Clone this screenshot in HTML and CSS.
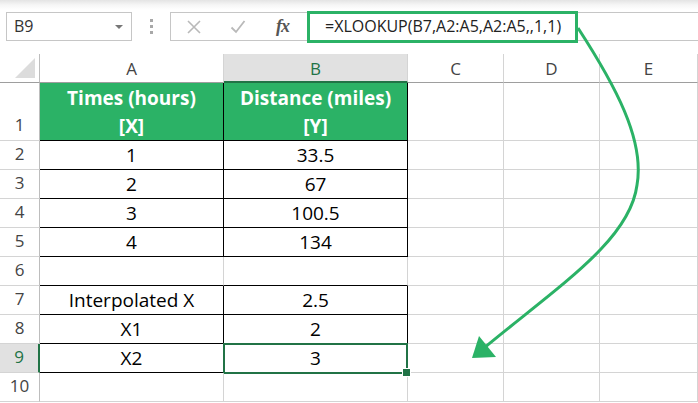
FILE: index.html
```html
<!DOCTYPE html>
<html>
<head>
<meta charset="utf-8">
<link rel="stylesheet" href="styles.css">
</head>
<body>
<div class="app">
  <div class="toolbar">
    <div class="namebox"><span class="ref">B9</span><span class="caret"></span></div>
    <div class="grip"><i></i><i></i><i></i></div>
    <div class="fbuttons">
      <svg class="ico" width="16" height="16" viewBox="0 0 16 16"><path d="M2 2 L14 14 M14 2 L2 14" stroke="#b9b9b9" stroke-width="1.6" fill="none"/></svg>
      <svg class="ico" width="16" height="16" viewBox="0 0 16 16"><path d="M1.5 8.5 L6 13 L14.5 2" stroke="#b9b9b9" stroke-width="1.8" fill="none"/></svg>
      <span class="fx">fx</span>
    </div>
    <div class="formula">=XLOOKUP(B7,A2:A5,A2:A5,,1,1)</div>
    <div class="highlight"></div>
  </div>

  <div class="sheet">
    <div class="c corner"><span class="tri"></span></div>
    <div class="c ch">A</div>
    <div class="c ch sel">B</div>
    <div class="c ch">C</div>
    <div class="c ch">D</div>
    <div class="c ch">E</div>

    <div class="c rh">1</div>
    <div class="c k hd"><span>Times (hours)<br>[X]</span></div>
    <div class="c k hd"><span>Distance (miles)<br>[Y]</span></div>
    <div class="c"></div><div class="c"></div><div class="c"></div>

    <div class="c rh">2</div>
    <div class="c k">1</div><div class="c k">33.5</div>
    <div class="c"></div><div class="c"></div><div class="c"></div>

    <div class="c rh">3</div>
    <div class="c k">2</div><div class="c k">67</div>
    <div class="c"></div><div class="c"></div><div class="c"></div>

    <div class="c rh">4</div>
    <div class="c k">3</div><div class="c k">100.5</div>
    <div class="c"></div><div class="c"></div><div class="c"></div>

    <div class="c rh">5</div>
    <div class="c k">4</div><div class="c k">134</div>
    <div class="c"></div><div class="c"></div><div class="c"></div>

    <div class="c rh">6</div>
    <div class="c kb"></div><div class="c kb"></div>
    <div class="c"></div><div class="c"></div><div class="c"></div>

    <div class="c rh">7</div>
    <div class="c k">Interpolated X</div><div class="c k">2.5</div>
    <div class="c"></div><div class="c"></div><div class="c"></div>

    <div class="c rh">8</div>
    <div class="c k">X1</div><div class="c k">2</div>
    <div class="c"></div><div class="c"></div><div class="c"></div>

    <div class="c rh sel">9</div>
    <div class="c k">X2</div><div class="c k active">3</div>
    <div class="c"></div><div class="c"></div><div class="c"></div>

    <div class="c rh">10</div>
    <div class="c"></div><div class="c"></div>
    <div class="c"></div><div class="c"></div><div class="c"></div>
  </div>

  <svg class="arrow" width="698" height="403" viewBox="0 0 698 403">
    <path d="M578 28 C615 85 645 140 637 185 C630 240 560 285 484 348" stroke="#2bb266" stroke-width="3" fill="none"/>
    <polygon points="472,358 479,336 496,357" fill="#2bb266"/>
  </svg>
</div>
</body>
</html>
```
FILE: styles.css
```css
* { box-sizing: border-box; }
html, body { margin: 0; padding: 0; background: #fff; }
.app {
  position: relative;
  width: 698px;
  height: 403px;
  overflow: hidden;
  font-family: "Open Sans", "Noto Sans", sans-serif;
}
.toolbar {
  position: relative;
  height: 54px;
  display: flex;
  align-items: flex-start;
  padding: 12px 0 0 6px;
  background: linear-gradient(to bottom, #e4e4e4 0px, #f6f6f6 5px, #ffffff 10px);
}
.namebox {
  width: 126px;
  height: 29px;
  border: 1px solid #c6c6c6;
  background: #fff;
  display: flex;
  align-items: center;
  justify-content: space-between;
  padding: 0 8px 0 7px;
}
.ref { font-size: 16px; color: #333; line-height: 27px; }
.caret {
  width: 0; height: 0;
  border-left: 4px solid transparent;
  border-right: 4px solid transparent;
  border-top: 4px solid #777;
}
.grip {
  width: 38px;
  height: 29px;
  display: flex;
  flex-direction: column;
  align-items: center;
  justify-content: center;
  gap: 3px;
}
.grip i { display: block; width: 3px; height: 3px; background: #a8a8a8; }
.fbuttons {
  width: 137px;
  height: 29px;
  border: 1px solid #c6c6c6;
  border-right: none;
  background: #fff;
  display: flex;
  align-items: center;
  padding-left: 15px;
}
.ico { display: block; flex: none; }
.ico + .ico { margin-left: 28px; }
.fx {
  margin-left: 30px;
  font-family: "Liberation Serif", serif;
  font-style: italic;
  font-weight: 700;
  font-size: 18px;
  color: #555;
  letter-spacing: -1px;
}
.formula {
  flex: 1;
  height: 29px;
  border: 1px solid #c6c6c6;
  border-right: none;
  background: #fff;
  padding-left: 17px;
  font-size: 16px;
  line-height: 27px;
  color: #222;
  white-space: nowrap;
}
.highlight {
  position: absolute;
  left: 307px;
  top: 11px;
  width: 271px;
  height: 32px;
  border: 3px solid #2bb266;
}
.sheet {
  display: grid;
  grid-template-columns: 40px 184px 184px 96px 96px 98px;
  grid-template-rows: 29px 58px repeat(9, 29px);
}
.c {
  border-right: 1px solid #d4d4d4;
  border-bottom: 1px solid #d4d4d4;
  display: flex;
  align-items: flex-end;
  justify-content: center;
  font-size: 19px;
  line-height: 26px;
  padding-bottom: 1px;
  color: #000;
  position: relative;
}
.corner { border-bottom-color: #9e9e9e; border-right-color: #bdbdbd; }
.tri {
  position: absolute;
  right: 4px;
  bottom: 4px;
  width: 0; height: 0;
  border-left: 20px solid transparent;
  border-bottom: 20px solid #dcdcdc;
}
.ch {
  align-items: flex-start;
  font-size: 17px;
  line-height: 28px;
  padding: 1px 0 0;
  color: #444;
  border-bottom-color: #9e9e9e;
}
.ch.sel { background: #e1e1e1; color: #217346; border-bottom: 2px solid #217346; }
.rh {
  align-items: flex-end;
  font-size: 17px;
  line-height: 26px;
  padding: 0 0 2px;
  color: #444;
  border-right-color: #bdbdbd;
}
.rh.sel { background: #e1e1e1; color: #217346; border-right: 2px solid #217346; }
.k { border-right-color: #000; border-bottom-color: #000; }
.kb { border-bottom-color: #000; }
.hd {
  background: #2bb266;
  color: #fff;
  font-weight: 700;
  align-items: flex-start;
  text-align: center;
  line-height: 28px;
  padding: 1px 0 0;
}
.active::after {
  content: "";
  position: absolute;
  top: -1px;
  left: -1px;
  right: -1px;
  bottom: -2px;
  border: 2px solid #217346;
}
.active::before {
  content: "";
  position: absolute;
  right: -4px;
  bottom: -5px;
  width: 7px;
  height: 7px;
  background: #217346;
  border: 1px solid #fff;
  z-index: 2;
}
.arrow {
  position: absolute;
  left: 0;
  top: 0;
  pointer-events: none;
}
```
